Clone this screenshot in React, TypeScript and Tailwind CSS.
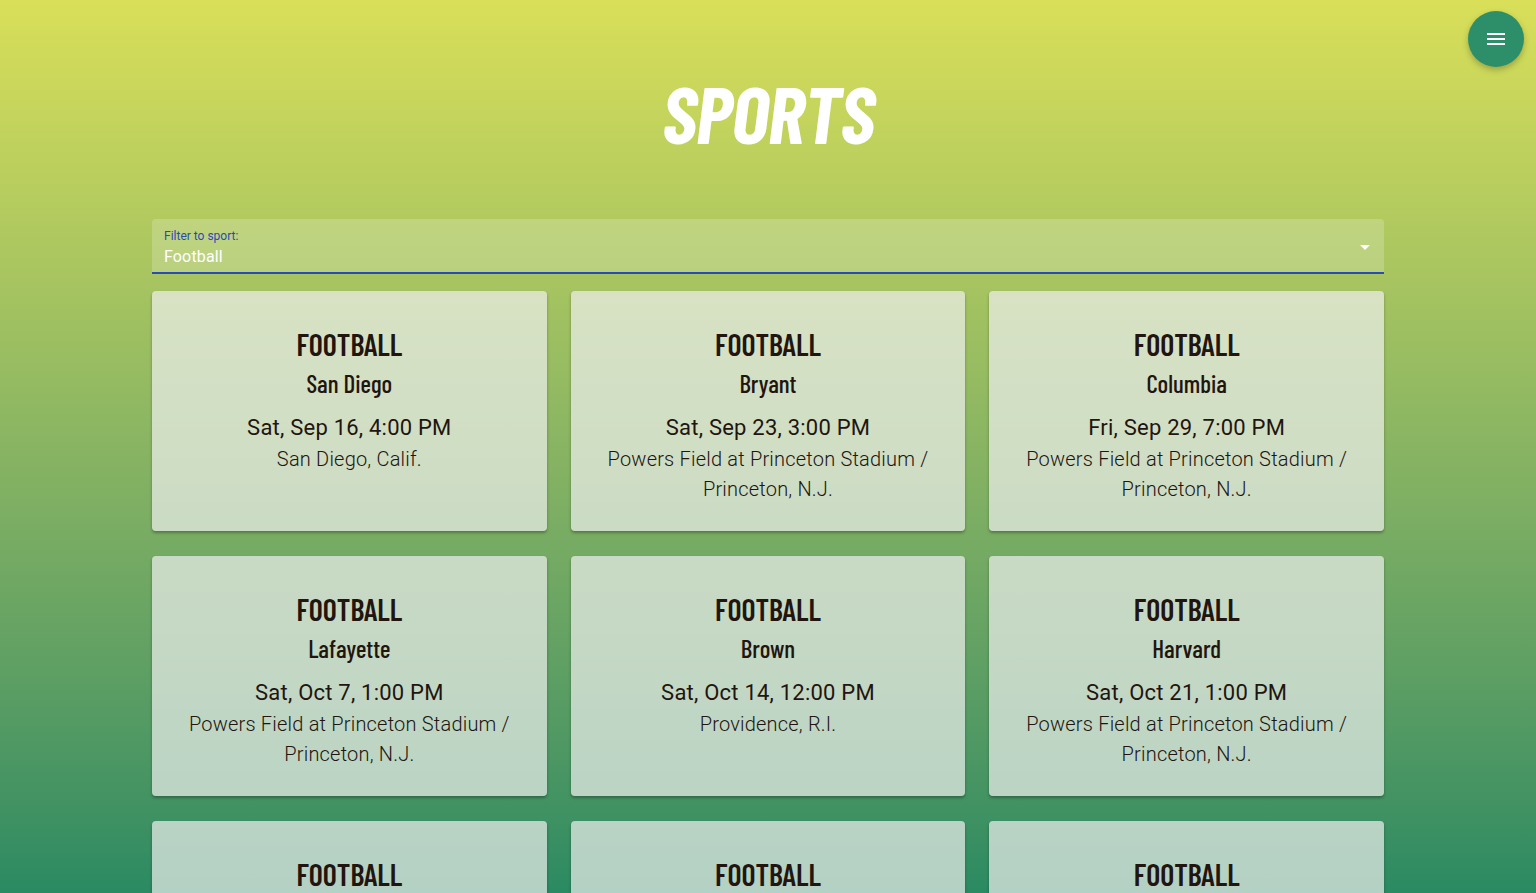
const games = [
  { opponent: 'San Diego', date: 'Sat, Sep 16, 4:00 PM', place: 'San Diego, Calif.' },
  { opponent: 'Bryant', date: 'Sat, Sep 23, 3:00 PM', place: 'Powers Field at Princeton Stadium / Princeton, N.J.' },
  { opponent: 'Columbia', date: 'Fri, Sep 29, 7:00 PM', place: 'Powers Field at Princeton Stadium / Princeton, N.J.' },
  { opponent: 'Lafayette', date: 'Sat, Oct 7, 1:00 PM', place: 'Powers Field at Princeton Stadium / Princeton, N.J.' },
  { opponent: 'Brown', date: 'Sat, Oct 14, 12:00 PM', place: 'Providence, R.I.' },
  { opponent: 'Harvard', date: 'Sat, Oct 21, 1:00 PM', place: 'Powers Field at Princeton Stadium / Princeton, N.J.' },
  { opponent: 'Cornell', date: 'Sat, Oct 28, 1:00 PM', place: 'Ithaca, N.Y.' },
  { opponent: 'Dartmouth', date: 'Sat, Nov 4, 1:00 PM', place: 'Powers Field at Princeton Stadium / Princeton, N.J.' },
  { opponent: 'Yale', date: 'Sat, Nov 11, 12:00 PM', place: 'New Haven, Conn.' },
];

const condensed = "font-['Barlow_Condensed','DejaVu_Sans_Condensed','Liberation_Sans_Narrow',sans-serif] [font-stretch:condensed]";

export default function App() {
  return (
    <div className="min-h-screen bg-linear-to-b from-[#d9df58] to-[#2a8a62] bg-fixed font-['Roboto',sans-serif] pb-10">
      {/* FAB */}
      <button className="fixed right-3 top-[11px] flex h-14 w-14 items-center justify-center rounded-full bg-[#2d8f69] shadow-[0_3px_6px_rgba(0,0,0,0.25)]">
        <svg width="24" height="24" viewBox="0 0 24 24" fill="white">
          <path d="M3 18h18v-2H3v2zm0-5h18v-2H3v2zm0-7v2h18V6H3z" />
        </svg>
      </button>

      <h1 className={`pt-[72px] pb-[67px] text-center text-[81px] leading-[80px] font-bold italic text-white tracking-[-0.01em] ${condensed}`}>
        SPORTS
      </h1>

      <div className="mx-auto w-[1232px]">
        {/* filter */}
        <div className="relative h-[55px] rounded-t bg-white/20 border-b-2 border-[#2a4bb5] px-3 pt-[9px]">
          <div className="text-xs leading-4 text-[#2a4bb5]">Filter to sport:</div>
          <div className="mt-px text-base leading-6 text-white tracking-[0.01em]">Football</div>
          <div className="absolute right-[14px] top-[26px] h-0 w-0 border-x-[5px] border-t-[5px] border-x-transparent border-t-white" />
        </div>

        {/* cards */}
        <div className="mt-[17px] grid grid-cols-3 gap-x-6 gap-y-[25px]">
          {games.map((g, i) => (
            <div
              key={i}
              className="h-[240px] rounded bg-[#eef0ee]/70 px-6 pt-[34px] text-center text-[#22140f] shadow-[0_2px_3px_rgba(0,0,0,0.3)]"
            >
              <div className={`text-[30px] leading-[38px] font-semibold ${condensed}`}>FOOTBALL</div>
              <div className={`mt-[1px] text-[25px] leading-[38px] font-medium ${condensed}`}>{g.opponent}</div>
              <div className="mt-[9px] text-[22px] leading-[33px] tracking-[0.01em]">{g.date}</div>
              <div className="mx-auto max-w-[340px] text-[20px] leading-[30px] font-light tracking-[0.01em]">{g.place}</div>
            </div>
          ))}
        </div>
      </div>
    </div>
  );
}
